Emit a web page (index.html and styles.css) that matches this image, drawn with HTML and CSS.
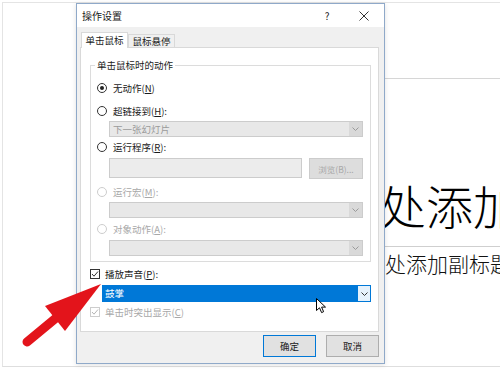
FILE: index.html
```html
<!DOCTYPE html>
<html lang="zh">
<head>
<meta charset="utf-8">
<title>操作设置</title>
<link rel="stylesheet" href="styles.css">
</head>
<body>
<div class="slide">
  <div class="ph-head"></div>
  <div class="slide-title">单击此处添加标题</div>
  <div class="slide-rule"></div>
  <div class="slide-sub">单击此处添加副标题</div>
</div>

<div class="dialog">
  <div class="titlebar">
    <span class="title">操作设置</span>
    <span class="tb-btns">
      <span class="help">?</span>
      <span class="close"><svg width="10" height="10" viewBox="0 0 10 10"><path d="M0.5 0.5 L9.5 9.5 M9.5 0.5 L0.5 9.5" stroke="#333" stroke-width="1" fill="none"/></svg></span>
    </span>
  </div>
  <div class="dlg-body">
    <div class="tabs">
      <div class="tab active">单击鼠标</div>
      <div class="tab">鼠标悬停</div>
    </div>
    <div class="panel">
      <fieldset class="group">
        <legend>单击鼠标时的动作</legend>
        <div class="opt o1"><span class="radio checked"></span>无动作(<u>N</u>)</div>
        <div class="opt o2"><span class="radio"></span>超链接到(<u>H</u>):</div>
        <div class="combo c1"><span class="val">下一张幻灯片</span><span class="arr"><svg width="7" height="4" viewBox="0 0 7 4"><path d="M0.5 0.5 L3.5 3.5 L6.5 0.5" stroke="#9a9a9a" fill="none"/></svg></span></div>
        <div class="opt o3"><span class="radio"></span>运行程序(<u>R</u>):</div>
        <div class="pathrow"><span class="textbox"></span><span class="browse">浏览(B)...</span></div>
        <div class="opt o4 disabled"><span class="radio"></span>运行宏(<u>M</u>):</div>
        <div class="combo c2"><span class="val"></span><span class="arr"><svg width="7" height="4" viewBox="0 0 7 4"><path d="M0.5 0.5 L3.5 3.5 L6.5 0.5" stroke="#9a9a9a" fill="none"/></svg></span></div>
        <div class="opt o5 disabled"><span class="radio"></span>对象动作(<u>A</u>):</div>
        <div class="combo c3"><span class="val"></span><span class="arr"><svg width="7" height="4" viewBox="0 0 7 4"><path d="M0.5 0.5 L3.5 3.5 L6.5 0.5" stroke="#9a9a9a" fill="none"/></svg></span></div>
      </fieldset>
      <div class="check-row k1"><span class="checkbox"><svg width="8" height="8" viewBox="0 0 8 8"><path d="M1 4 L3 6.2 L7 1.5" stroke="#333" stroke-width="1" fill="none"/></svg></span>播放声音(<u>P</u>):</div>
      <div class="sound-combo"><span class="sel">鼓掌</span><span class="arr"><svg width="7" height="4" viewBox="0 0 7 4"><path d="M0.5 0.5 L3.5 3.5 L6.5 0.5" stroke="#333" fill="none"/></svg></span></div>
      <div class="check-row k2 disabled"><span class="checkbox"><svg width="8" height="8" viewBox="0 0 8 8"><path d="M1 4 L3 6.2 L7 1.5" stroke="#b5b5b5" stroke-width="1" fill="none"/></svg></span>单击时突出显示(<u>C</u>)</div>
    </div>
    <div class="buttons">
      <button class="btn default">确定</button>
      <button class="btn">取消</button>
    </div>
  </div>
</div>

<svg class="pointer" width="11" height="16" viewBox="0 0 11 16"><path d="M0.5 0.5 L0.5 12.5 L3.5 9.8 L5.6 14.6 L7.6 13.7 L5.6 9.1 L9.5 9.1 Z" fill="#fff" stroke="#000" stroke-width="1" stroke-linejoin="round"/></svg>

<svg class="red-arrow" width="500" height="375" viewBox="0 0 500 375">
  <line x1="56" y1="318" x2="27" y2="342" stroke="#e3141b" stroke-width="9" stroke-linecap="round"/>
  <polygon points="101,284 45,306 65,331" fill="#e3141b"/>
</svg>
</body>
</html>
```
FILE: styles.css
```css
* { box-sizing: border-box; }
html, body { margin: 0; padding: 0; }
body {
  width: 500px;
  height: 375px;
  overflow: hidden;
  background: #fff;
  position: relative;
  font-family: "Noto Sans CJK SC", "Liberation Sans", sans-serif;
}

/* slide behind the dialog */
.slide {
  margin: 2px 0 0 2px;
  height: 365px;
  border-top: 1px solid #e4e4e4;
  border-left: 1px solid #e4e4e4;
  border-bottom: 1px solid #dedede;
  overflow: hidden;
  white-space: nowrap;
}
.ph-head {
  height: 76px;
  margin-left: 370px;
  border-bottom: 1px solid #d6d6d6;
}
.slide-title {
  margin-top: 101px;
  padding-left: 235px;
  font-size: 47px;
  line-height: 50px;
  font-weight: 300;
  color: #000;
}
.slide-rule {
  margin-top: 16px;
  margin-left: 370px;
  border-top: 1px solid #cfcfcf;
}
.slide-sub {
  margin-top: 4px;
  padding-left: 319px;
  font-size: 21px;
  line-height: 24px;
  font-weight: 300;
  color: #111;
}

/* dialog window */
.dialog {
  position: absolute;
  left: 76px;
  top: 3px;
  width: 309px;
  height: 361px;
  border: 1px solid #8fa9c9;
  background: #f0f0f0;
  box-shadow: 0 1px 5px rgba(0, 0, 0, 0.12);
  font-size: 9.5px;
  color: #1a1a1a;
  display: flex;
  flex-direction: column;
}
.titlebar {
  height: 23px;
  flex: none;
  background: #fff;
  display: flex;
  align-items: center;
  justify-content: space-between;
  padding-left: 5px;
}
.title { font-size: 10px; line-height: 14px; }
.tb-btns { display: flex; align-items: center; padding-right: 13px; }
.help { width: 14px; text-align: center; font-size: 10px; line-height: 14px; }
.close { width: 14px; height: 14px; margin-left: 23px; display: flex; align-items: center; justify-content: center; }

.dlg-body {
  flex: 1;
  display: flex;
  flex-direction: column;
  padding: 5px 5px 0 3px;
}
.tabs {
  height: 16px;
  display: flex;
  align-items: flex-end;
  margin-bottom: -1px;
  padding-left: 1px;
}
.tab {
  width: 47px;
  height: 14px;
  border: 1px solid #d9d9d9;
  background: #f0f0f0;
  text-align: center;
  line-height: 12px;
}
.tab.active {
  height: 16px;
  background: #fff;
  border-bottom: none;
  position: relative;
  z-index: 1;
  line-height: 15px;
}

.panel {
  height: 285px;
  background: #fff;
  border: 1px solid #d9d9d9;
  padding: 0 7px 0 9px;
}
.group {
  margin: 11px 0 0;
  padding: 0 7px 5px 6px;
  border: 1px solid #dcdcdc;
  min-width: 0;
}
.group legend {
  padding: 0 2px;
  margin-left: -2px;
  line-height: 13px;
}
.opt {
  height: 14px;
  display: flex;
  align-items: center;
  line-height: 14px;
}
.opt.disabled { color: #a8a8a8; }
.o1 { margin-top: 9px; }
.o2 { margin-top: 9px; }
.o3 { margin-top: 3px; }
.o4 { margin-top: 6px; }
.o5 { margin-top: 4px; }
.radio {
  flex: none;
  width: 10px;
  height: 10px;
  border: 1px solid #333;
  border-radius: 50%;
  background: #fff;
  margin-right: 6px;
  display: flex;
  align-items: center;
  justify-content: center;
}
.radio.checked::after {
  content: "";
  width: 4px;
  height: 4px;
  border-radius: 50%;
  background: #222;
}
.opt.disabled .radio { border-color: #cdcdcd; }

.combo {
  height: 16px;
  margin-left: 12px;
  display: flex;
  border: 1px solid #cccccc;
  background: #e8e8e8;
  color: #9a9a9a;
}
.c1 { margin-top: 3px; }
.c2 { margin-top: 3px; }
.c3 { margin-top: 4px; }
.combo .val { flex: 1; padding-left: 3px; line-height: 14px; }
.combo .arr {
  width: 13px;
  background: #d9d9d9;
  display: flex;
  align-items: center;
  justify-content: center;
}
.pathrow {
  margin: 4px 0 0 12px;
  height: 21px;
  display: flex;
  gap: 7px;
}
.textbox {
  flex: 1;
  height: 20px;
  border: 1px solid #cccccc;
  background: #ececec;
}
.browse {
  width: 54px;
  border: 1px solid #cccccc;
  background: #dddddd;
  color: #a8a8a8;
  font-size: 8.5px;
  line-height: 12px;
  white-space: nowrap;
  display: flex;
  align-items: center;
  justify-content: center;
}

.check-row {
  height: 14px;
  display: flex;
  align-items: center;
  line-height: 14px;
}
.k1 { margin-top: 5px; }
.k2 { margin-top: 3px; }
.check-row.disabled { color: #a8a8a8; }
.checkbox {
  flex: none;
  width: 10px;
  height: 10px;
  border: 1px solid #333;
  background: #fff;
  margin-right: 5px;
  display: flex;
  align-items: center;
  justify-content: center;
}
.check-row.disabled .checkbox { border-color: #cdcdcd; }

.sound-combo {
  margin: 4px 0 0 12px;
  height: 17px;
  display: flex;
  border: 1px solid #0078d7;
}
.sound-combo .sel {
  flex: 1;
  background: #0078d7;
  color: #fff;
  padding-left: 2px;
  line-height: 15px;
}
.sound-combo .arr {
  width: 13px;
  background: #e5f1fb;
  border-left: 1px solid #0078d7;
  display: flex;
  align-items: center;
  justify-content: center;
}

.buttons {
  margin-top: 3px;
  display: flex;
  justify-content: flex-end;
  gap: 10px;
}
.btn {
  width: 53px;
  height: 22px;
  border: 1px solid #adadad;
  background: #e1e1e1;
  font-family: inherit;
  font-size: 9.5px;
  color: #1a1a1a;
  padding: 0;
}
.btn.default { border-color: #0078d7; }

/* overlays */
.pointer {
  position: absolute;
  left: 316px;
  top: 298px;
}
.red-arrow {
  position: absolute;
  left: 0;
  top: 0;
  pointer-events: none;
}
```
